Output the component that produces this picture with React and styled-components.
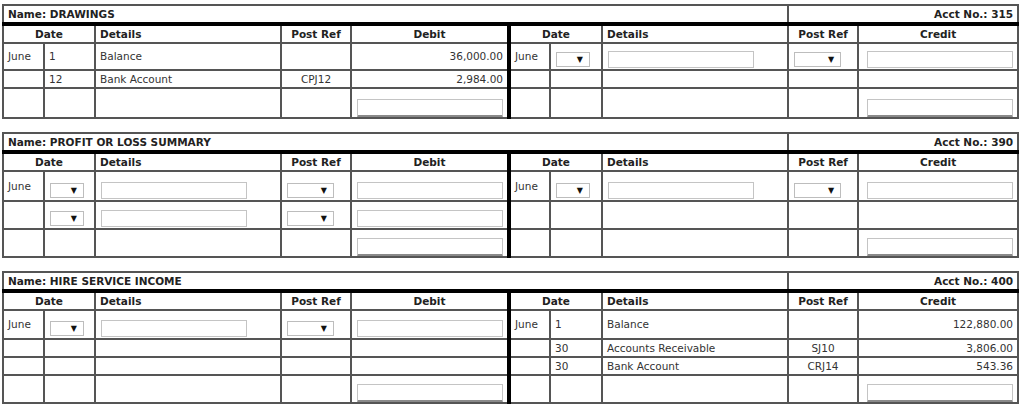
import styled, { createGlobalStyle } from "styled-components";

const GlobalStyle = createGlobalStyle`
  body {
    margin: 0;
    background: #fff;
    font-family: "DejaVu Sans", Verdana, sans-serif;
  }
`;

const COLS = [41, 51, 186, 70, 158, 41, 52, 186, 70, 160];

// row heights are the cell heights; borders add ~2-3px on top of these
const ledgers = [
  {
    name: "DRAWINGS",
    acct: "315",
    left: [
      { h: 25, cells: ["June", "1", "Balance", "", "36,000.00"] },
      { h: 16, cells: ["", "12", "Bank Account", "CPJ12", "2,984.00"] },
      { h: 28, cells: ["", "", "", "", "#total"] },
    ],
    right: [
      { cells: ["June", "#sel", "#in", "#selw", "#in"] },
      { cells: ["", "", "", "", ""] },
      { cells: ["", "", "", "", "#total"] },
    ],
  },
  {
    name: "PROFIT OR LOSS SUMMARY",
    acct: "390",
    left: [
      { h: 28, cells: ["June", "#sel", "#in", "#selw", "#in"] },
      { h: 26, cells: ["", "#sel", "#in", "#selw", "#in"] },
      { h: 26, cells: ["", "", "", "", "#total"] },
    ],
    right: [
      { cells: ["June", "#sel", "#in", "#selw", "#in"] },
      { cells: ["", "", "", "", ""] },
      { cells: ["", "", "", "", "#total"] },
    ],
  },
  {
    name: "HIRE SERVICE INCOME",
    acct: "400",
    left: [
      { h: 27, cells: ["June", "#sel", "#in", "#selw", "#in"] },
      { h: 16, cells: ["", "", "", "", ""] },
      { h: 16, cells: ["", "", "", "", ""] },
      { h: 26, cells: ["", "", "", "", "#total"] },
    ],
    right: [
      { cells: ["June", "1", "Balance", "", "122,880.00"] },
      { cells: ["", "30", "Accounts Receivable", "SJ10", "3,806.00"] },
      { cells: ["", "30", "Bank Account", "CRJ14", "543.36"] },
      { cells: ["", "", "", "", "#total"] },
    ],
  },
];

const Page = styled.div`
  display: flex;
  flex-direction: column;
  gap: 13px;
  padding: 4px 0 0 2px;
  width: 1016px;
`;

const Ledger = styled.table`
  width: 1016px;
  table-layout: fixed;
  border-collapse: collapse;
  font-size: 10.5px;
  color: #333;
`;

const Col = styled.col`
  width: ${(p) => p.$w}px;
`;

const NameCell = styled.td`
  height: 16px;
  padding: 0 4px;
  border: 2px solid #555;
  border-bottom: 4px solid #000;
  font-weight: bold;
  color: #222;
  text-align: ${(p) => (p.$right ? "right" : "left")};
  white-space: nowrap;
  line-height: 13px;
`;

const Head = styled.th`
  height: 16px;
  padding: 0 4px;
  border: 2px solid #555;
  border-right: ${(p) => (p.$split ? "4px solid #000" : "2px solid #555")};
  font-weight: bold;
  color: #222;
  line-height: 13px;
  text-align: ${(p) => p.$align || "center"};
`;

const Cell = styled.td`
  height: ${(p) => p.$h}px;
  padding: ${(p) => (p.$ctl ? "0 4px 0 5px" : "0 4px")};
  border: 2px solid #555;
  border-right: ${(p) => (p.$split ? "4px solid #000" : "2px solid #555")};
  vertical-align: ${(p) => (p.$ctl ? "bottom" : "middle")};
  text-align: ${(p) => p.$align || "left"};
  white-space: nowrap;
  line-height: 13px;
`;

const TextBox = styled.div`
  box-sizing: border-box;
  display: block;
  margin-left: ${(p) => (p.$end ? "auto" : "0")};
  width: 146px;
  height: ${(p) => (p.$total ? 19 : 17)}px;
  background: #fff;
  border: 1px solid #c4c4c4;
  border-bottom: ${(p) => (p.$total ? "3px solid #8a8a8a" : "1px solid #c4c4c4")};
  margin-bottom: ${(p) => (p.$total ? "-1px" : "1px")};
`;

const SelectBox = styled.div`
  box-sizing: border-box;
  display: flex;
  align-items: center;
  justify-content: flex-end;
  width: ${(p) => (p.$wide ? 47 : 34)}px;
  height: 15px;
  margin-bottom: 2px;
  padding-right: 6px;
  background: #fff;
  border: 1px solid #bdbdbd;
  font-size: 8px;
  color: #111;
`;

const ALIGN = ["left", "left", "left", "center", "right"];

function renderCells(row, h, side) {
  return row.cells.map((v, i) => {
    const split = side === "left" && i === 4;
    const key = side + i;
    if (v === "#sel" || v === "#selw") {
      return (
        <Cell key={key} $h={h} $ctl $split={split}>
          <SelectBox $wide={v === "#selw"}>▼</SelectBox>
        </Cell>
      );
    }
    if (v === "#in" || v === "#total") {
      return (
        <Cell key={key} $h={h} $ctl $split={split}>
          <TextBox $total={v === "#total"} $end={i === 4} />
        </Cell>
      );
    }
    return (
      <Cell key={key} $h={h} $split={split} $align={ALIGN[i]}>
        {v}
      </Cell>
    );
  });
}

function LedgerTable({ data }) {
  return (
    <Ledger>
      <colgroup>
        {COLS.map((w, i) => (
          <Col key={i} $w={w} />
        ))}
      </colgroup>
      <tbody>
        <tr>
          <NameCell colSpan={8}>Name: {data.name}</NameCell>
          <NameCell colSpan={2} $right>
            Acct No.: {data.acct}
          </NameCell>
        </tr>
        <tr>
          <Head colSpan={2}>Date</Head>
          <Head $align="left">Details</Head>
          <Head>Post Ref</Head>
          <Head $split>Debit</Head>
          <Head colSpan={2}>Date</Head>
          <Head $align="left">Details</Head>
          <Head>Post Ref</Head>
          <Head>Credit</Head>
        </tr>
        {data.left.map((row, r) => (
          <tr key={r}>
            {renderCells(row, row.h, "left")}
            {renderCells(data.right[r], row.h, "right")}
          </tr>
        ))}
      </tbody>
    </Ledger>
  );
}

export default function App() {
  return (
    <>
      <GlobalStyle />
      <Page>
        {ledgers.map((l) => (
          <LedgerTable key={l.name} data={l} />
        ))}
      </Page>
    </>
  );
}
